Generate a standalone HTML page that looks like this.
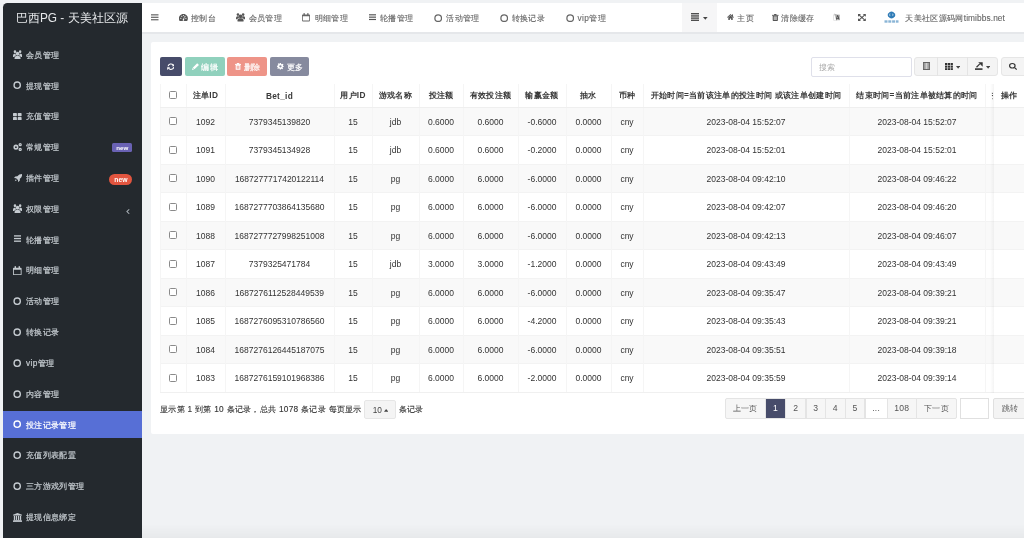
<!DOCTYPE html>
<html><head><meta charset="utf-8"><style>
*{box-sizing:border-box;margin:0;padding:0}
html,body{width:1024px;height:538px;overflow:hidden}
body{background:#f0f2f4;font-family:"Liberation Sans",sans-serif;font-size:8.3px;color:#333;position:relative}
.a{position:absolute;white-space:nowrap}
.sb{left:2.6px;top:2.6px;width:139.3px;height:540px;background:#24292e;border-top-left-radius:4.5px}
.logo{left:2px;top:3px;width:139.5px;height:31px;color:#e6e8ea;font-size:11.85px;line-height:31px;text-align:center}
.mi{left:2.6px;width:139.3px;height:27.5px;color:#c5cbd0;line-height:28px}
.mi .tx{position:absolute;left:23.4px;top:0;letter-spacing:0.35px;-webkit-text-stroke:0.2px currentColor}
.mi.act{background:#576fd6;color:#fff}
.circ{border:1.3px solid #c5cbd0;border-radius:50%}
.badge{color:#fff;font-weight:bold;font-size:6.2px;text-align:center}
.hdr{left:141.9px;top:2.6px;width:900px;height:29.8px;background:#fff}
.ni{top:2.7px;height:31px;line-height:31px;color:#666;letter-spacing:0.35px;-webkit-text-stroke:0.12px #666}
.hc{border:1.2px solid #666;border-radius:50%}
.box{left:151px;top:42px;width:900px;height:392px;background:#fff;border-radius:2px}
.btn{top:57px;height:19.3px;border-radius:2px;color:#fff}
.bt{top:57px;height:18.5px;line-height:18.5px;color:#fff;letter-spacing:0.35px;-webkit-text-stroke:0.2px #fff}
table{position:absolute;left:159.5px;top:84px;border-collapse:collapse;table-layout:fixed}
td,th{text-align:center;overflow:hidden;white-space:nowrap;border-left:1px solid #f5f5f5;padding:0}
th{height:23.4px;font-weight:bold;color:#3a3a3a;letter-spacing:0.3px;border-bottom:1px solid #efefef;padding-top:1px}
td{height:28.5px;color:#333;font-size:8.5px;border-top:1px solid #f3f3f3}
tr.odd td{background:#f9f9f9}
tr:last-child td{border-bottom:1px solid #f0f0f0}
.cb{display:inline-block;width:8px;height:8px;border:1px solid #8a8a8a;border-radius:1.5px;background:#fff;vertical-align:middle;position:relative;top:-1px;left:-0.5px}
</style></head><body>
<div style="position:absolute;left:0;top:0;width:1024px;height:538px;will-change:transform"><div class="a sb"></div>
<div class="a logo">巴西PG - 天美社区源</div>
<div class="a mi" style="top:40.70px"><span class="tx">会员管理</span></div>
<svg class="a" style="left:12.90px;top:49.60px;width:9.10px;height:9.50px;fill:#c5cbd0;" viewBox="0 0 20 18" preserveAspectRatio="none"><g style="color:#c5cbd0"><circle cx="10" cy="7" r="3.9"/><path d="M3.4 18 V15.4 Q3.4 11.2 7.6 11.2 H12.4 Q16.6 11.2 16.6 15.4 V18 Z"/><circle cx="4.3" cy="3.3" r="2.8"/><circle cx="15.7" cy="3.3" r="2.8"/><path d="M0 13.2 V10.4 Q0 6.9 3.4 6.9 H5.8 Q5.8 8.9 6.8 10.2 Q3.6 10.8 3 13.2 Z"/><path d="M20 13.2 V10.4 Q20 6.9 16.6 6.9 H14.2 Q14.2 8.9 13.2 10.2 Q16.4 10.8 17 13.2 Z"/></g></svg>
<div class="a mi" style="top:71.52px"><span class="tx">提现管理</span></div>
<svg class="a" style="left:13.3px;top:81.32px;width:8.4px;height:8.4px" viewBox="0 0 8.4 8.4"><circle cx="4.2" cy="4.2" r="3.15" fill="none" stroke="#c5cbd0" stroke-width="1.35"/></svg>
<div class="a mi" style="top:102.34px"><span class="tx">充值管理</span></div>
<svg class="a" style="left:13.20px;top:112.74px;width:8.60px;height:7.20px;fill:#c5cbd0;" viewBox="0 0 16 16" preserveAspectRatio="none"><g style="color:#c5cbd0"><rect x="0" y="0" width="7.2" height="7.2" rx="1"/><rect x="8.8" y="0" width="7.2" height="7.2" rx="1"/><rect x="0" y="8.8" width="7.2" height="7.2" rx="1"/><rect x="8.8" y="8.8" width="7.2" height="7.2" rx="1"/></g></svg>
<div class="a mi" style="top:133.16px"><span class="tx">常规管理</span></div>
<svg class="a" style="left:12.90px;top:143.16px;width:9.10px;height:8.10px;fill:#c5cbd0;" viewBox="0 0 18 16" preserveAspectRatio="none"><g style="color:#c5cbd0"><path fill-rule="evenodd" d="M5.8 3.2 A5 5 0 1 1 5.8 13.2 A5 5 0 1 1 5.8 3.2 Z M5.8 6.4 A1.8 1.8 0 1 0 5.8 10 A1.8 1.8 0 1 0 5.8 6.4 Z"/><path fill-rule="evenodd" d="M14.2 0 A3.3 3.3 0 1 1 14.2 6.6 A3.3 3.3 0 1 1 14.2 0 Z M14.2 2.4 A0.9 0.9 0 1 0 14.2 4.2 A0.9 0.9 0 1 0 14.2 2.4 Z"/><path fill-rule="evenodd" d="M14.2 9.4 A3.3 3.3 0 1 1 14.2 16 A3.3 3.3 0 1 1 14.2 9.4 Z M14.2 11.8 A0.9 0.9 0 1 0 14.2 13.6 A0.9 0.9 0 1 0 14.2 11.8 Z"/></g></svg>
<div class="a mi" style="top:163.98px"><span class="tx">插件管理</span></div>
<svg class="a" style="left:13.80px;top:173.98px;width:8.20px;height:8.10px;fill:#c5cbd0;" viewBox="0 0 16 16" preserveAspectRatio="none"><g style="color:#c5cbd0"><path d="M16 0 Q10 0 6.5 4.5 L2.5 4.8 L0 8 L4 8.2 L7.8 12 L8 16 L11.2 13.5 L11.5 9.5 Q16 6 16 0 Z"/><path d="M3.5 10.5 L5.5 12.5 L1.5 14.5 Z"/></g></svg>
<div class="a mi" style="top:194.80px"><span class="tx">权限管理</span></div>
<svg class="a" style="left:12.90px;top:203.70px;width:9.10px;height:9.50px;fill:#c5cbd0;" viewBox="0 0 20 18" preserveAspectRatio="none"><g style="color:#c5cbd0"><circle cx="10" cy="7" r="3.9"/><path d="M3.4 18 V15.4 Q3.4 11.2 7.6 11.2 H12.4 Q16.6 11.2 16.6 15.4 V18 Z"/><circle cx="4.3" cy="3.3" r="2.8"/><circle cx="15.7" cy="3.3" r="2.8"/><path d="M0 13.2 V10.4 Q0 6.9 3.4 6.9 H5.8 Q5.8 8.9 6.8 10.2 Q3.6 10.8 3 13.2 Z"/><path d="M20 13.2 V10.4 Q20 6.9 16.6 6.9 H14.2 Q14.2 8.9 13.2 10.2 Q16.4 10.8 17 13.2 Z"/></g></svg>
<div class="a mi" style="top:225.62px"><span class="tx">轮播管理</span></div>
<svg class="a" style="left:13.80px;top:235.42px;width:7.30px;height:7.10px;fill:#c5cbd0;" viewBox="0 0 16 14" preserveAspectRatio="none"><g style="color:#c5cbd0"><rect x="0" y="0.5" width="16" height="2.6"/><rect x="0" y="5.7" width="16" height="2.6"/><rect x="0" y="10.9" width="16" height="2.6"/></g></svg>
<div class="a mi" style="top:256.44px"><span class="tx">明细管理</span></div>
<svg class="a" style="left:13.20px;top:266.04px;width:8.60px;height:9.20px;fill:#c5cbd0;" viewBox="0 0 16 16" preserveAspectRatio="none"><g style="color:#c5cbd0"><path fill-rule="evenodd" d="M1.5 3 H14.5 Q16 3 16 4.5 V14.5 Q16 16 14.5 16 H1.5 Q0 16 0 14.5 V4.5 Q0 3 1.5 3 Z M1.6 6.4 V14.4 H14.4 V6.4 Z"/><rect x="3" y="0.3" width="2.6" height="4"/><rect x="10.4" y="0.3" width="2.6" height="4"/></g></svg>
<div class="a mi" style="top:287.26px"><span class="tx">活动管理</span></div>
<svg class="a" style="left:13.3px;top:297.06px;width:8.4px;height:8.4px" viewBox="0 0 8.4 8.4"><circle cx="4.2" cy="4.2" r="3.15" fill="none" stroke="#c5cbd0" stroke-width="1.35"/></svg>
<div class="a mi" style="top:318.08px"><span class="tx">转换记录</span></div>
<svg class="a" style="left:13.3px;top:327.88px;width:8.4px;height:8.4px" viewBox="0 0 8.4 8.4"><circle cx="4.2" cy="4.2" r="3.15" fill="none" stroke="#c5cbd0" stroke-width="1.35"/></svg>
<div class="a mi" style="top:348.90px"><span class="tx">vip管理</span></div>
<svg class="a" style="left:13.3px;top:358.70px;width:8.4px;height:8.4px" viewBox="0 0 8.4 8.4"><circle cx="4.2" cy="4.2" r="3.15" fill="none" stroke="#c5cbd0" stroke-width="1.35"/></svg>
<div class="a mi" style="top:379.72px"><span class="tx">内容管理</span></div>
<svg class="a" style="left:13.3px;top:389.52px;width:8.4px;height:8.4px" viewBox="0 0 8.4 8.4"><circle cx="4.2" cy="4.2" r="3.15" fill="none" stroke="#c5cbd0" stroke-width="1.35"/></svg>
<div class="a mi act" style="top:410.54px"><span class="tx">投注记录管理</span></div>
<svg class="a" style="left:13.3px;top:420.34px;width:8.4px;height:8.4px" viewBox="0 0 8.4 8.4"><circle cx="4.2" cy="4.2" r="3.15" fill="none" stroke="#fff" stroke-width="1.35"/></svg>
<div class="a mi" style="top:441.36px"><span class="tx">充值列表配置</span></div>
<svg class="a" style="left:13.3px;top:451.16px;width:8.4px;height:8.4px" viewBox="0 0 8.4 8.4"><circle cx="4.2" cy="4.2" r="3.15" fill="none" stroke="#c5cbd0" stroke-width="1.35"/></svg>
<div class="a mi" style="top:472.18px"><span class="tx">三方游戏列管理</span></div>
<svg class="a" style="left:13.3px;top:481.98px;width:8.4px;height:8.4px" viewBox="0 0 8.4 8.4"><circle cx="4.2" cy="4.2" r="3.15" fill="none" stroke="#c5cbd0" stroke-width="1.35"/></svg>
<div class="a mi" style="top:503.00px"><span class="tx">提现信息绑定</span></div>
<svg class="a" style="left:12.80px;top:512.70px;width:9.00px;height:8.90px;fill:#c5cbd0;" viewBox="0 0 16 16" preserveAspectRatio="none"><g style="color:#c5cbd0"><path d="M8 0 L16 3.2 V4.5 H0 V3.2 Z"/><rect x="1.5" y="5" width="2.2" height="7.5"/><rect x="5" y="5" width="2.2" height="7.5"/><rect x="8.8" y="5" width="2.2" height="7.5"/><rect x="12.3" y="5" width="2.2" height="7.5"/><rect x="0.5" y="12.5" width="15" height="1.6"/><rect x="0" y="14.2" width="16" height="1.8"/></g></svg>
<div class="a badge" style="left:112px;top:142.7px;width:20.4px;height:9.2px;line-height:9.2px;background:#6a62b4;border-radius:1.5px">new</div>
<div class="a badge" style="left:109.4px;top:173.6px;width:23px;height:11px;line-height:11px;background:#e2553f;border-radius:5.5px;font-size:6.8px">new</div>
<svg class="a" style="left:126.30px;top:208.80px;width:3.60px;height:5.10px;fill:#aab2b8;" viewBox="0 0 6 9" preserveAspectRatio="none"><g style="color:#aab2b8"><path d="M4.8 0 L6 1.2 L2.6 4.5 L6 7.8 L4.8 9 L0.3 4.5 Z"/></g></svg>
<div class="a hdr"></div>
<div class="a" style="left:141.5px;top:32.4px;width:900px;height:1.8px;background:#e5e7ea"></div>
<svg class="a" style="left:151.20px;top:14.10px;width:7.50px;height:6.60px;fill:#666;" viewBox="0 0 16 14" preserveAspectRatio="none"><g style="color:#666"><rect x="0" y="0.5" width="16" height="2.6"/><rect x="0" y="5.7" width="16" height="2.6"/><rect x="0" y="10.9" width="16" height="2.6"/></g></svg>
<div class="a ni" style="left:191px">控制台</div>
<div class="a ni" style="left:248.6px">会员管理</div>
<div class="a ni" style="left:314.6px">明细管理</div>
<div class="a ni" style="left:380px">轮播管理</div>
<div class="a ni" style="left:446.3px">活动管理</div>
<div class="a ni" style="left:511.6px">转换记录</div>
<div class="a ni" style="left:577.5px">vip管理</div>
<svg class="a" style="left:179.20px;top:14.10px;width:8.80px;height:6.90px;fill:#555;" viewBox="0 0 16 12" preserveAspectRatio="none"><g style="color:#555"><path d="M1.1 12 A8 8 0 1 1 14.9 12 Z"/><g fill="#fff"><circle cx="3.4" cy="7.6" r="1"/><circle cx="5" cy="3.9" r="1"/><circle cx="8" cy="2.6" r="1"/><circle cx="11" cy="3.9" r="1"/><circle cx="12.6" cy="7.6" r="1"/><path d="M7 10.6 L9.6 4.2 L10.2 4.4 L9 10.9 Z"/><circle cx="8" cy="10.4" r="1.4"/></g></g></svg>
<svg class="a" style="left:236.00px;top:13.20px;width:9.10px;height:8.60px;fill:#555;" viewBox="0 0 20 18" preserveAspectRatio="none"><g style="color:#555"><circle cx="10" cy="7" r="3.9"/><path d="M3.4 18 V15.4 Q3.4 11.2 7.6 11.2 H12.4 Q16.6 11.2 16.6 15.4 V18 Z"/><circle cx="4.3" cy="3.3" r="2.8"/><circle cx="15.7" cy="3.3" r="2.8"/><path d="M0 13.2 V10.4 Q0 6.9 3.4 6.9 H5.8 Q5.8 8.9 6.8 10.2 Q3.6 10.8 3 13.2 Z"/><path d="M20 13.2 V10.4 Q20 6.9 16.6 6.9 H14.2 Q14.2 8.9 13.2 10.2 Q16.4 10.8 17 13.2 Z"/></g></svg>
<svg class="a" style="left:302.20px;top:13.20px;width:8.00px;height:8.40px;fill:#666;" viewBox="0 0 16 16" preserveAspectRatio="none"><g style="color:#666"><path fill-rule="evenodd" d="M1.5 3 H14.5 Q16 3 16 4.5 V14.5 Q16 16 14.5 16 H1.5 Q0 16 0 14.5 V4.5 Q0 3 1.5 3 Z M1.6 6.4 V14.4 H14.4 V6.4 Z"/><rect x="3" y="0.3" width="2.6" height="4"/><rect x="10.4" y="0.3" width="2.6" height="4"/></g></svg>
<svg class="a" style="left:368.80px;top:14.30px;width:7.20px;height:6.30px;fill:#555;" viewBox="0 0 16 14" preserveAspectRatio="none"><g style="color:#555"><rect x="0" y="0.5" width="16" height="2.6"/><rect x="0" y="5.7" width="16" height="2.6"/><rect x="0" y="10.9" width="16" height="2.6"/></g></svg>
<svg class="a" style="left:434.1px;top:14px;width:8.4px;height:8.4px" viewBox="0 0 8.4 8.4"><circle cx="4.2" cy="4.2" r="3.3" fill="none" stroke="#666" stroke-width="1.25"/></svg>
<svg class="a" style="left:500.0px;top:14px;width:8.4px;height:8.4px" viewBox="0 0 8.4 8.4"><circle cx="4.2" cy="4.2" r="3.3" fill="none" stroke="#666" stroke-width="1.25"/></svg>
<svg class="a" style="left:565.9px;top:14px;width:8.4px;height:8.4px" viewBox="0 0 8.4 8.4"><circle cx="4.2" cy="4.2" r="3.3" fill="none" stroke="#666" stroke-width="1.25"/></svg>
<div class="a" style="left:682px;top:2.6px;width:35px;height:29.6px;background:#f6f6f7"></div>
<svg class="a" style="left:690.90px;top:13.00px;width:8.20px;height:8.00px;fill:#333;" viewBox="0 0 16 16" preserveAspectRatio="none"><g style="color:#333"><rect x="0" y="0.3" width="16" height="2.4"/><rect x="0" y="4.7" width="16" height="2.4"/><rect x="0" y="9" width="16" height="2.4"/><rect x="0" y="13.3" width="16" height="2.4"/></g></svg>
<svg class="a" style="left:703.00px;top:17.00px;width:4.60px;height:2.70px;fill:#444;" viewBox="0 0 10 6" preserveAspectRatio="none"><g style="color:#444"><path d="M0 0 H10 L5 6 Z"/></g></svg>
<svg class="a" style="left:727.20px;top:14.30px;width:7.00px;height:6.20px;fill:#555;" viewBox="0 0 16 13" preserveAspectRatio="none"><g style="color:#555"><path d="M8 0 L16 6.6 L14.8 7.8 L8 2.4 L1.2 7.8 L0 6.6 Z"/><path d="M3 7 L8 3 L13 7 V13 H9.5 V9.5 H6.5 V13 H3 Z"/><rect x="11.5" y="0.8" width="2.2" height="4"/></g></svg>
<div class="a ni" style="left:737.4px">主页</div>
<svg class="a" style="left:772.00px;top:13.90px;width:6.60px;height:7.00px;fill:#555;" viewBox="0 0 14 16" preserveAspectRatio="none"><g style="color:#555"><rect x="0" y="2" width="14" height="2"/><rect x="4.5" y="0" width="5" height="2.5"/><path fill-rule="evenodd" d="M1.5 4 H12.5 V14.5 Q12.5 16 11 16 H3 Q1.5 16 1.5 14.5 Z M3.8 5.5 V13.8 H10.2 V5.5 Z"/><rect x="3.8" y="5.5" width="6.4" height="8.3" opacity=".45"/></g></svg>
<div class="a ni" style="left:781.3px">清除缓存</div>
<svg class="a" style="left:832.90px;top:13.20px;width:7.30px;height:8.10px;fill:#444;" viewBox="0 0 16 16" preserveAspectRatio="none"><g style="color:#444"><path fill-rule="evenodd" d="M0.5 3 H9 V15.5 H2.5 Q0.5 15.5 0.5 13.5 Z M1.8 4.3 V14.2 H7.7 V4.3 Z" opacity=".22"/><path d="M2.5 0.8 L7.5 3 H13.8 Q15.6 3 15.6 4.8 V12.6 Q15.6 14.4 13.8 14.4 H7 Z" opacity=".35"/><path d="M9 4.4 H11.4 L14.2 13 H12.3 L11.7 11.2 H8.7 L8.1 13 H6.4 Z M9.1 9.7 H11.3 L10.2 6.3 Z"/></g></svg>
<svg class="a" style="left:858.00px;top:14.00px;width:7.80px;height:6.90px;fill:#555;" viewBox="0 0 16 16" preserveAspectRatio="none"><g style="color:#555"><path d="M0 0 H6.2 L0 6.2 Z"/><path d="M16 0 V6.2 L9.8 0 Z"/><path d="M0 16 V9.8 L6.2 16 Z"/><path d="M16 16 H9.8 L16 9.8 Z"/><path d="M2.5 2.5 L13.5 13.5 M13.5 2.5 L2.5 13.5" fill="none" stroke="currentColor" stroke-width="2.2"/></g></svg>
<svg class="a" style="left:884px;top:11px;width:15px;height:13px" viewBox="0 0 15 13"><path d="M7.5 0.4 Q9.2 0.4 10.8 2.4 Q11.9 3.9 10.8 5.4 Q9.2 7.4 7.5 7.4 Q5.8 7.4 4.2 5.4 Q3.1 3.9 4.2 2.4 Q5.8 0.4 7.5 0.4 Z" fill="#2f7bb6"/><path d="M6 2.6 Q5.2 3.9 6 5.1 M8 3.4 Q8.8 3 9.2 3.6 Q9.4 4.4 8.4 4.6" fill="none" stroke="#d8e8f4" stroke-width="0.7"/><g fill="#3c84bb" opacity=".6"><rect x="0.5" y="9.3" width="3" height="2.4"/><rect x="4.3" y="9.3" width="3" height="2.4"/><rect x="8.1" y="9.3" width="3" height="2.4"/><rect x="11.9" y="9.3" width="2.6" height="2.4"/></g></svg>
<div class="a ni" style="left:905.3px">天美社区源码网<span style="letter-spacing:.1px">timibbs.net</span></div>
<div class="a box"></div>
<div class="a btn" style="left:160px;width:22px;background:#474c6a"></div>
<div class="a btn" style="left:184.6px;width:40.099999999999994px;background:#90d1bd"></div>
<div class="a btn" style="left:227.3px;width:39.599999999999966px;background:#ee9488"></div>
<div class="a btn" style="left:269.5px;width:39.89999999999998px;background:#868a9e"></div>
<svg class="a" style="left:166.60px;top:63.00px;width:7.80px;height:7.40px;fill:#fff;" viewBox="0 0 16 16" preserveAspectRatio="none"><g style="color:#fff"><path d="M2.2 7 A5.9 5.9 0 0 1 12.6 4.2" fill="none" stroke="currentColor" stroke-width="2.3"/><path d="M15.6 0.8 V7 H9.4 Z"/><path d="M13.8 9 A5.9 5.9 0 0 1 3.4 11.8" fill="none" stroke="currentColor" stroke-width="2.3"/><path d="M0.4 15.2 V9 H6.6 Z"/></g></svg>
<svg class="a" style="left:191.80px;top:63.20px;width:7.20px;height:7.00px;fill:#fff;" viewBox="0 0 16 16" preserveAspectRatio="none"><g style="color:#fff"><path d="M11.6 0.6 L15.4 4.4 L5.4 14.4 L1.6 10.6 Z"/><path d="M1 11.4 L4.6 15 L0 16 Z"/></g></svg>
<div class="a bt" style="left:201.3px;top:58px">编辑</div>
<svg class="a" style="left:235.10px;top:63.20px;width:6.10px;height:6.80px;fill:#fff;" viewBox="0 0 14 16" preserveAspectRatio="none"><g style="color:#fff"><rect x="0" y="2.2" width="14" height="2.2"/><rect x="4.2" y="0" width="5.6" height="3"/><path fill-rule="evenodd" d="M1.6 4 H12.4 V16 H1.6 Z M4 6.2 V13.6 H10 V6.2 Z"/><rect x="4" y="6.2" width="6" height="7.4" opacity=".35"/></g></svg>
<div class="a bt" style="left:243.6px;top:58px">删除</div>
<svg class="a" style="left:277.20px;top:63.40px;width:6.80px;height:6.60px;fill:#fff;" viewBox="0 0 16 16" preserveAspectRatio="none"><g style="color:#fff"><path fill-rule="evenodd" d="M6.6 0 H9.4 L9.8 2.3 L11.6 3.1 L13.5 1.7 L15.3 3.5 L13.9 5.4 L14.7 7.2 L16 7.6 V9.4 L13.7 9.8 L12.9 11.6 L14.3 13.5 L12.5 15.3 L10.6 13.9 L9.8 14.2 L9.4 16 H6.6 L6.2 13.7 L4.4 12.9 L2.5 14.3 L0.7 12.5 L2.1 10.6 L1.8 9.8 L0 9.4 V6.6 L2.3 6.2 L3.1 4.4 L1.7 2.5 L3.5 0.7 L5.4 2.1 L6.2 1.8 Z M8 5.2 A2.8 2.8 0 1 0 8 10.8 A2.8 2.8 0 1 0 8 5.2 Z"/></g></svg>
<div class="a bt" style="left:286.8px;top:58px">更多</div>
<div class="a" style="left:811px;top:57px;width:101px;height:20px;border:1px solid #dfe0ea;border-radius:2px;background:#fff"></div>
<div class="a" style="left:818.6px;top:57px;height:20px;line-height:20px;color:#aaa;letter-spacing:.35px">搜索</div>
<div class="a" style="left:914.4px;top:57.2px;width:83.2px;height:19.1px;border:1px solid #e6e6e6;border-radius:3px;background:#f4f4f4"></div>
<div class="a" style="left:937.2px;top:57.2px;width:1px;height:19.1px;background:#e4e4e4"></div>
<div class="a" style="left:967px;top:57.2px;width:1px;height:19.1px;background:#e4e4e4"></div>
<div class="a" style="left:1001.2px;top:57.2px;width:40px;height:19.1px;border:1px solid #e6e6e6;border-radius:3px;background:#f4f4f4"></div>
<svg class="a" style="left:923.00px;top:62.10px;width:7.00px;height:8.00px;fill:#666;" viewBox="0 0 14 16" preserveAspectRatio="none"><g style="color:#666"><path fill-rule="evenodd" d="M0 0 H14 V16 H0 Z M1.8 1.8 V14.2 H12.2 V1.8 Z"/><rect x="1.8" y="1.8" width="3.6" height="12.4" opacity=".6"/><rect x="8.6" y="1.8" width="3.6" height="12.4" opacity=".6"/><rect x="5.4" y="1.8" width="3.2" height="12.4" opacity=".25"/></g></svg>
<svg class="a" style="left:944.80px;top:62.70px;width:7.90px;height:7.30px;fill:#333;" viewBox="0 0 16 16" preserveAspectRatio="none"><g style="color:#333"><rect x="0" y="0" width="4.6" height="4.6"/><rect x="5.7" y="0" width="4.6" height="4.6"/><rect x="11.4" y="0" width="4.6" height="4.6"/><rect x="0" y="5.7" width="4.6" height="4.6"/><rect x="5.7" y="5.7" width="4.6" height="4.6"/><rect x="11.4" y="5.7" width="4.6" height="4.6"/><rect x="0" y="11.4" width="4.6" height="4.6"/><rect x="5.7" y="11.4" width="4.6" height="4.6"/><rect x="11.4" y="11.4" width="4.6" height="4.6"/></g></svg>
<svg class="a" style="left:955.80px;top:66.00px;width:4.30px;height:2.70px;fill:#444;" viewBox="0 0 10 6" preserveAspectRatio="none"><g style="color:#444"><path d="M0 0 H10 L5 6 Z"/></g></svg>
<svg class="a" style="left:974.90px;top:62.00px;width:8.00px;height:8.00px;fill:#333;" viewBox="0 0 16 16" preserveAspectRatio="none"><g style="color:#333"><rect x="0" y="12.6" width="15" height="3.2"/><path d="M3 10.5 L9.6 3.9" fill="none" stroke="currentColor" stroke-width="2.4"/><path d="M6.5 0.6 H15.4 V9.5 Z"/></g></svg>
<svg class="a" style="left:985.90px;top:66.00px;width:4.30px;height:2.70px;fill:#444;" viewBox="0 0 10 6" preserveAspectRatio="none"><g style="color:#444"><path d="M0 0 H10 L5 6 Z"/></g></svg>
<svg class="a" style="left:1008.80px;top:63.20px;width:8.20px;height:6.90px;fill:#333;" viewBox="0 0 16 16" preserveAspectRatio="none"><g style="color:#333"><path fill-rule="evenodd" d="M6.5 0 A6.5 6.5 0 1 1 6.5 13 A6.5 6.5 0 1 1 6.5 0 Z M6.5 2.3 A4.2 4.2 0 1 0 6.5 10.7 A4.2 4.2 0 1 0 6.5 2.3 Z"/><path d="M10 11.7 L11.7 10 L16 14.3 L14.3 16 Z"/></g></svg>
<table style="width:900px"><colgroup><col style="width:26px"><col style="width:39px"><col style="width:109px"><col style="width:38px"><col style="width:47px"><col style="width:44px"><col style="width:55px"><col style="width:48px"><col style="width:45px"><col style="width:32px"><col style="width:206px"><col style="width:136px"><col style="width:8px"><col style="width:67px"></colgroup>
<tr><th><span class="cb" style="top:-1.6px"></span></th><th>注单ID</th><th>Bet_id</th><th>用户ID</th><th>游戏名称</th><th>投注额</th><th>有效投注额</th><th>输赢金额</th><th>抽水</th><th>币种</th><th>开始时间=当前该注单的投注时间 或该注单创建时间</th><th>结束时间=当前注单被结算的时间</th><th style="text-align:left;padding-left:6.5px">投</th><th style="text-align:left;padding-left:8px;border-left:none;">操作</th></tr>
<tr class="odd"><td><span class="cb"></span></td><td>1092</td><td>7379345139820</td><td>15</td><td>jdb</td><td>0.6000</td><td>0.6000</td><td>-0.6000</td><td>0.0000</td><td>cny</td><td>2023-08-04 15:52:07</td><td>2023-08-04 15:52:07</td><td></td><td style="border-left:none"></td></tr>
<tr><td><span class="cb"></span></td><td>1091</td><td>7379345134928</td><td>15</td><td>jdb</td><td>0.6000</td><td>0.6000</td><td>-0.2000</td><td>0.0000</td><td>cny</td><td>2023-08-04 15:52:01</td><td>2023-08-04 15:52:01</td><td></td><td style="border-left:none"></td></tr>
<tr class="odd"><td><span class="cb"></span></td><td>1090</td><td>1687277717420122114</td><td>15</td><td>pg</td><td>6.0000</td><td>6.0000</td><td>-6.0000</td><td>0.0000</td><td>cny</td><td>2023-08-04 09:42:10</td><td>2023-08-04 09:46:22</td><td></td><td style="border-left:none"></td></tr>
<tr><td><span class="cb"></span></td><td>1089</td><td>1687277703864135680</td><td>15</td><td>pg</td><td>6.0000</td><td>6.0000</td><td>-6.0000</td><td>0.0000</td><td>cny</td><td>2023-08-04 09:42:07</td><td>2023-08-04 09:46:20</td><td></td><td style="border-left:none"></td></tr>
<tr class="odd"><td><span class="cb"></span></td><td>1088</td><td>1687277727998251008</td><td>15</td><td>pg</td><td>6.0000</td><td>6.0000</td><td>-6.0000</td><td>0.0000</td><td>cny</td><td>2023-08-04 09:42:13</td><td>2023-08-04 09:46:07</td><td></td><td style="border-left:none"></td></tr>
<tr><td><span class="cb"></span></td><td>1087</td><td>7379325471784</td><td>15</td><td>jdb</td><td>3.0000</td><td>3.0000</td><td>-1.2000</td><td>0.0000</td><td>cny</td><td>2023-08-04 09:43:49</td><td>2023-08-04 09:43:49</td><td></td><td style="border-left:none"></td></tr>
<tr class="odd"><td><span class="cb"></span></td><td>1086</td><td>1687276112528449539</td><td>15</td><td>pg</td><td>6.0000</td><td>6.0000</td><td>-6.0000</td><td>0.0000</td><td>cny</td><td>2023-08-04 09:35:47</td><td>2023-08-04 09:39:21</td><td></td><td style="border-left:none"></td></tr>
<tr><td><span class="cb"></span></td><td>1085</td><td>1687276095310786560</td><td>15</td><td>pg</td><td>6.0000</td><td>6.0000</td><td>-4.2000</td><td>0.0000</td><td>cny</td><td>2023-08-04 09:35:43</td><td>2023-08-04 09:39:21</td><td></td><td style="border-left:none"></td></tr>
<tr class="odd"><td><span class="cb"></span></td><td>1084</td><td>1687276126445187075</td><td>15</td><td>pg</td><td>6.0000</td><td>6.0000</td><td>-6.0000</td><td>0.0000</td><td>cny</td><td>2023-08-04 09:35:51</td><td>2023-08-04 09:39:18</td><td></td><td style="border-left:none"></td></tr>
<tr><td><span class="cb"></span></td><td>1083</td><td>1687276159101968386</td><td>15</td><td>pg</td><td>6.0000</td><td>6.0000</td><td>-2.0000</td><td>0.0000</td><td>cny</td><td>2023-08-04 09:35:59</td><td>2023-08-04 09:39:14</td><td></td><td style="border-left:none"></td></tr>
</table>
<div class="a" style="left:990px;top:84px;width:4px;height:308.5px;background:linear-gradient(90deg,rgba(0,0,0,0),rgba(0,0,0,.045))"></div>
<div class="a" style="left:141.5px;top:524px;width:900px;height:14px;background:linear-gradient(rgba(0,0,0,0),rgba(0,0,0,.035))"></div>
<div class="a" style="left:160px;top:402px;height:14px;line-height:14px;color:#333;letter-spacing:.29px;-webkit-text-stroke:0.12px #333">显示第 1 到第 10 条记录，总共 1078 条记录 每页显示</div>
<div class="a" style="left:364.2px;top:399.9px;width:31.7px;height:19.3px;background:#f4f4f4;border:1px solid #e6e6e6;border-radius:2px"></div>
<div class="a" style="left:372.7px;top:403px;line-height:14px;color:#444">10</div>
<svg class="a" style="left:384.00px;top:408.90px;width:4.30px;height:2.70px;fill:#444;" viewBox="0 0 10 6" preserveAspectRatio="none"><g style="color:#444"><path d="M0 6 H10 L5 0 Z"/></g></svg>
<div class="a" style="left:398.8px;top:402px;height:14px;line-height:14px;color:#333;letter-spacing:.35px;-webkit-text-stroke:0.12px #333">条记录</div>
<div class="a" style="left:724.5px;top:398.3px;width:41.5px;height:20.5px;background:#f6f6f6;border:1px solid #e4e4e4;line-height:18.5px;text-align:center;color:#555;letter-spacing:.3px;border-radius:2px 0 0 2px;">上一页</div>
<div class="a" style="left:765px;top:398.3px;width:21.299999999999955px;height:20.5px;background:#474c6a;border:1px solid #e4e4e4;line-height:18.5px;text-align:center;color:#fff;letter-spacing:.3px;font-size:8.6px;">1</div>
<div class="a" style="left:785.3px;top:398.3px;width:21.200000000000045px;height:20.5px;background:#f6f6f6;border:1px solid #e4e4e4;line-height:18.5px;text-align:center;color:#555;letter-spacing:.3px;font-size:8.6px;">2</div>
<div class="a" style="left:805.5px;top:398.3px;width:20.5px;height:20.5px;background:#f6f6f6;border:1px solid #e4e4e4;line-height:18.5px;text-align:center;color:#555;letter-spacing:.3px;font-size:8.6px;">3</div>
<div class="a" style="left:825px;top:398.3px;width:20.600000000000023px;height:20.5px;background:#f6f6f6;border:1px solid #e4e4e4;line-height:18.5px;text-align:center;color:#555;letter-spacing:.3px;font-size:8.6px;">4</div>
<div class="a" style="left:844.6px;top:398.3px;width:20.899999999999977px;height:20.5px;background:#f6f6f6;border:1px solid #e4e4e4;line-height:18.5px;text-align:center;color:#555;letter-spacing:.3px;font-size:8.6px;">5</div>
<div class="a" style="left:864.5px;top:398.3px;width:23.299999999999955px;height:20.5px;background:#fff;border:1px solid #e4e4e4;line-height:18.5px;text-align:center;color:#555;letter-spacing:.3px;">...</div>
<div class="a" style="left:886.8px;top:398.3px;width:30.0px;height:20.5px;background:#f6f6f6;border:1px solid #e4e4e4;line-height:18.5px;text-align:center;color:#555;letter-spacing:.3px;font-size:8.6px;">108</div>
<div class="a" style="left:915.8px;top:398.3px;width:41.700000000000045px;height:20.5px;background:#f6f6f6;border:1px solid #e4e4e4;line-height:18.5px;text-align:center;color:#555;letter-spacing:.3px;border-radius:0 2px 2px 0;">下一页</div>
<div class="a" style="left:959.8px;top:398.3px;width:29.6px;height:20.5px;background:#fff;border:1px solid #e0e0e0"></div>
<div class="a" style="left:993px;top:398.3px;width:40px;height:20.5px;background:#f4f4f4;border:1px solid #e0e0e0;border-radius:2px;line-height:18.5px;padding-left:7.5px;color:#555;letter-spacing:.3px">跳转</div></div>
</body></html>
